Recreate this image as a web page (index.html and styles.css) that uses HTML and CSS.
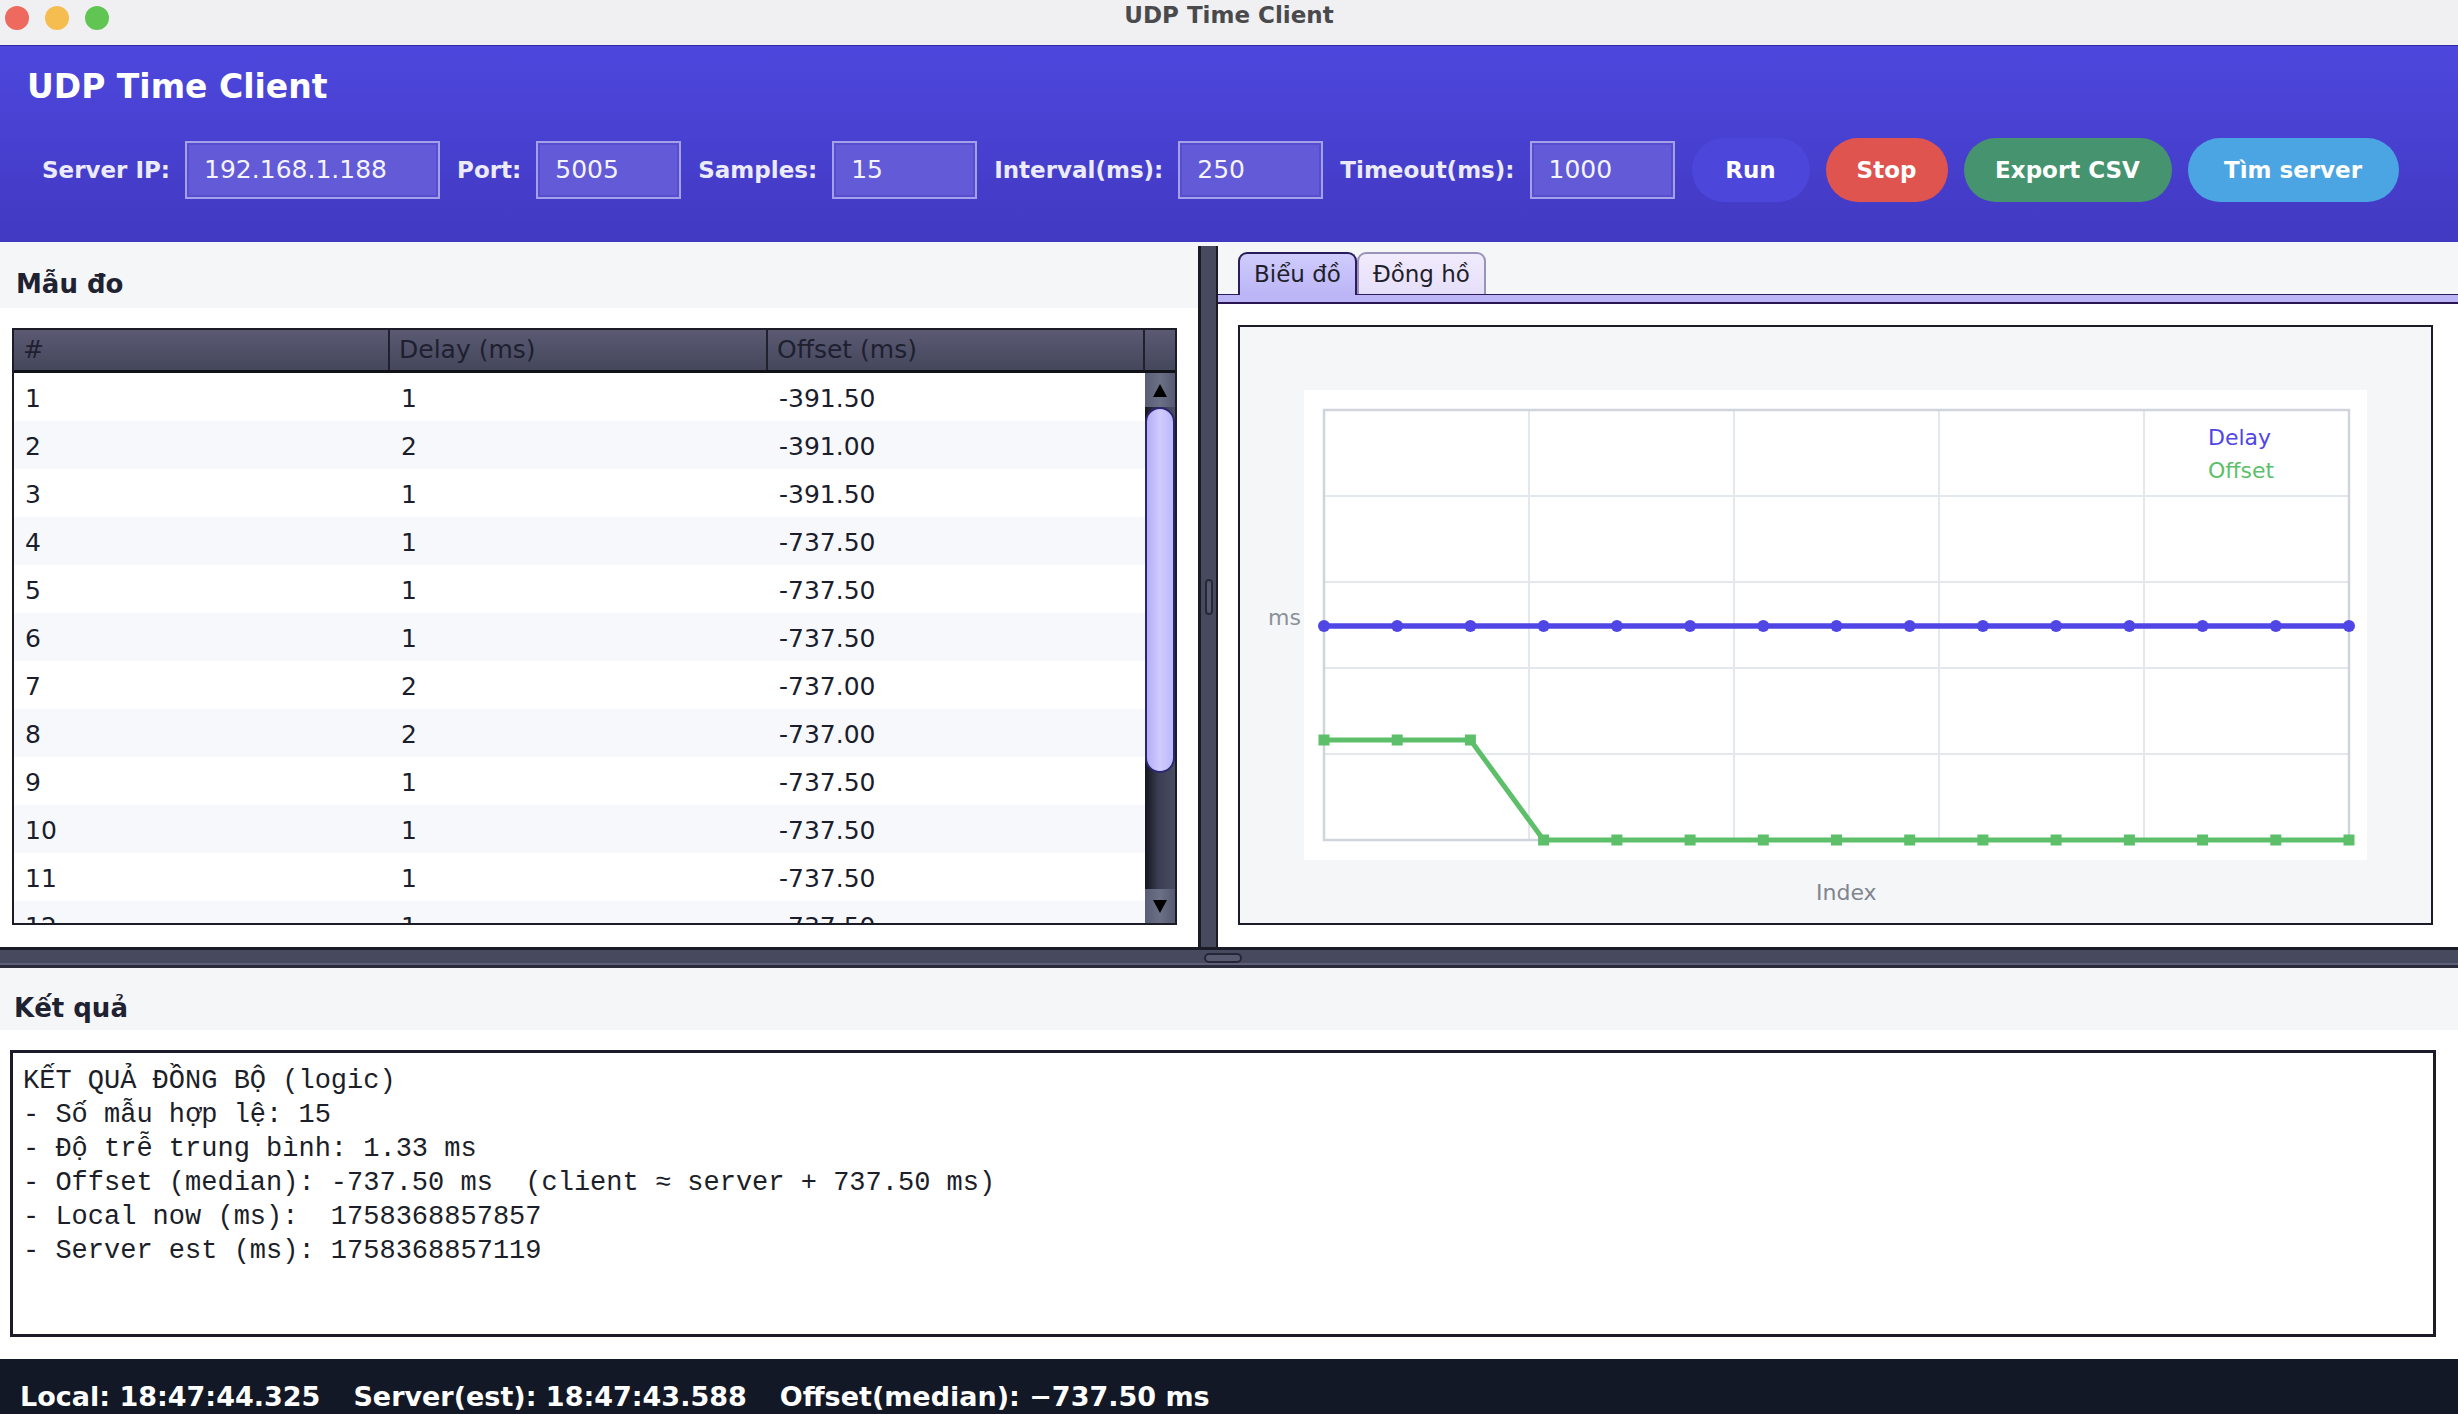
FILE: index.html
```html
<!DOCTYPE html>
<html lang="vi">
<head>
<meta charset="utf-8">
<title>UDP Time Client</title>
<link rel="stylesheet" href="styles.css">
</head>
<body>
<div class="window">
  <div class="titlebar">
    <div class="lights"><span class="light red"></span><span class="light yellow"></span><span class="light green"></span></div>
    <div class="wtitle">UDP Time Client</div>
    <div></div>
  </div>

  <header class="appbar">
    <h1 class="apptitle">UDP Time Client</h1>
    <div class="controls">
      <span class="lbl">Server IP:</span><span class="field w-ip">192.168.1.188</span>
      <span class="lbl">Port:</span><span class="field w-sm">5005</span>
      <span class="lbl">Samples:</span><span class="field w-sm">15</span>
      <span class="lbl">Interval(ms):</span><span class="field w-sm">250</span>
      <span class="lbl">Timeout(ms):</span><span class="field w-sm">1000</span>
      <button class="btn run">Run</button>
      <button class="btn stop">Stop</button>
      <button class="btn export">Export CSV</button>
      <button class="btn find">Tìm server</button>
    </div>
  </header>

  <main class="main">
    <section class="left">
      <h2 class="ptitle">Mẫu đo</h2>
      <div class="tablewrap">
        <div class="table">
          <div class="thead">
            <div class="th">#</div>
            <div class="th">Delay (ms)</div>
            <div class="th">Offset (ms)</div>
            <div class="th th-last"></div>
          </div>
          <div class="tbody">
            <div class="rows">
              <div class="row"><span>1</span><span>1</span><span>-391.50</span></div>
              <div class="row"><span>2</span><span>2</span><span>-391.00</span></div>
              <div class="row"><span>3</span><span>1</span><span>-391.50</span></div>
              <div class="row"><span>4</span><span>1</span><span>-737.50</span></div>
              <div class="row"><span>5</span><span>1</span><span>-737.50</span></div>
              <div class="row"><span>6</span><span>1</span><span>-737.50</span></div>
              <div class="row"><span>7</span><span>2</span><span>-737.00</span></div>
              <div class="row"><span>8</span><span>2</span><span>-737.00</span></div>
              <div class="row"><span>9</span><span>1</span><span>-737.50</span></div>
              <div class="row"><span>10</span><span>1</span><span>-737.50</span></div>
              <div class="row"><span>11</span><span>1</span><span>-737.50</span></div>
              <div class="row"><span>12</span><span>1</span><span>-737.50</span></div>
            </div>
            <div class="vscroll">
              <div class="sbtn"><span class="tri-up"></span></div>
              <div class="track"><div class="thumb"></div></div>
              <div class="sbtn"><span class="tri-down"></span></div>
            </div>
          </div>
        </div>
      </div>
    </section>

    <div class="vdiv"><span class="vgrip"></span></div>

    <section class="right">
      <div class="tabbar">
        <div class="tab active">Biểu đồ</div>
        <div class="tab">Đồng hồ</div>
      </div>
      <div class="tabstrip"></div>
      <div class="chartwrap">
        <div class="chart">
          <svg class="plot" viewBox="0 0 1191 596" width="1191" height="596">
            <rect x="64" y="63" width="1063" height="470" fill="#ffffff"/>
            <g stroke="#e3e7ee" stroke-width="2">
              <line x1="289" y1="83" x2="289" y2="513"/>
              <line x1="494" y1="83" x2="494" y2="513"/>
              <line x1="699" y1="83" x2="699" y2="513"/>
              <line x1="904" y1="83" x2="904" y2="513"/>
              <line x1="84" y1="169" x2="1109" y2="169"/>
              <line x1="84" y1="255" x2="1109" y2="255"/>
              <line x1="84" y1="341" x2="1109" y2="341"/>
              <line x1="84" y1="427" x2="1109" y2="427"/>
            </g>
            <rect x="84" y="83" width="1025" height="430" fill="none" stroke="#cfd4dd" stroke-width="2.5"/>
            <g font-family="DejaVu Sans, sans-serif" font-size="22">
              <text x="968" y="118" fill="#4f46e5">Delay</text>
              <text x="968" y="151" fill="#5dbf6a">Offset</text>
              <text x="28" y="298" fill="#8b909a">ms</text>
              <text x="576" y="573" fill="#80858f">Index</text>
            </g>
            <polyline fill="none" stroke="#4f46e5" stroke-width="5.5" points="84,299 1109,299"/>
            <g fill="#4f46e5">
              <circle cx="84" cy="299" r="6"/>
              <circle cx="157.2" cy="299" r="6"/>
              <circle cx="230.4" cy="299" r="6"/>
              <circle cx="303.6" cy="299" r="6"/>
              <circle cx="376.9" cy="299" r="6"/>
              <circle cx="450.1" cy="299" r="6"/>
              <circle cx="523.3" cy="299" r="6"/>
              <circle cx="596.5" cy="299" r="6"/>
              <circle cx="669.7" cy="299" r="6"/>
              <circle cx="742.9" cy="299" r="6"/>
              <circle cx="816.1" cy="299" r="6"/>
              <circle cx="889.4" cy="299" r="6"/>
              <circle cx="962.6" cy="299" r="6"/>
              <circle cx="1035.8" cy="299" r="6"/>
              <circle cx="1109" cy="299" r="6"/>
            </g>
            <polyline fill="none" stroke="#5dbf6a" stroke-width="5" stroke-linejoin="round" points="84,413 157.2,413 230.4,413 303.6,513 1109,513"/>
            <g fill="#5dbf6a">
              <rect x="78.5" y="407.5" width="11" height="11"/>
              <rect x="151.7" y="407.5" width="11" height="11"/>
              <rect x="224.9" y="407.5" width="11" height="11"/>
              <rect x="298.1" y="507.5" width="11" height="11"/>
              <rect x="371.4" y="507.5" width="11" height="11"/>
              <rect x="444.6" y="507.5" width="11" height="11"/>
              <rect x="517.8" y="507.5" width="11" height="11"/>
              <rect x="591" y="507.5" width="11" height="11"/>
              <rect x="664.2" y="507.5" width="11" height="11"/>
              <rect x="737.4" y="507.5" width="11" height="11"/>
              <rect x="810.6" y="507.5" width="11" height="11"/>
              <rect x="883.9" y="507.5" width="11" height="11"/>
              <rect x="957.1" y="507.5" width="11" height="11"/>
              <rect x="1030.3" y="507.5" width="11" height="11"/>
              <rect x="1103.5" y="507.5" width="11" height="11"/>
            </g>
          </svg>
        </div>
      </div>
    </section>
  </main>

  <div class="hdiv"><span class="hgrip"></span></div>

  <section class="results">
    <h2 class="rtitle">Kết quả</h2>
    <div class="rbody">
<pre class="output">KẾT QUẢ ĐỒNG BỘ (logic)
- Số mẫu hợp lệ: 15
- Độ trễ trung bình: 1.33 ms
- Offset (median): -737.50 ms  (client ≈ server + 737.50 ms)
- Local now (ms):  1758368857857
- Server est (ms): 1758368857119</pre>
    </div>
  </section>

  <footer class="status">
    <span>Local: 18:47:44.325</span>
    <span>Server(est): 18:47:43.588</span>
    <span>Offset(median): −737.50 ms</span>
  </footer>
</div>
</body>
</html>
```

FILE: styles.css
```css
* { box-sizing: border-box; }
html, body { margin: 0; padding: 0; }
body {
  width: 2458px;
  height: 1414px;
  overflow: hidden;
  background: #f5f6f8;
  font-family: "DejaVu Sans", "Noto Sans", sans-serif;
  color: #1f2230;
}
.window { display: flex; flex-direction: column; height: 1414px; }

/* title bar */
.titlebar {
  height: 46px; flex: none;
  background: #f0f0f2;
  border-bottom: 1px solid #2d28a6;
  display: grid;
  grid-template-columns: 1fr auto 1fr;
}
.lights { display: flex; gap: 16px; padding: 6px 0 0 5px; }
.light { width: 24px; height: 24px; border-radius: 50%; }
.red { background: #ee6a5f; }
.yellow { background: #f5bd4f; }
.green { background: #61c554; }
.wtitle { font-weight: bold; font-size: 23px; line-height: 30px; color: #4a4a4c; }

/* app header */
.appbar {
  height: 196px; flex: none;
  background: linear-gradient(180deg, #4d47dd 0%, #4239c2 100%);
  padding-top: 21px;
}
.apptitle { margin: 0 0 0 27px; font-size: 33px; line-height: 40px; font-weight: bold; color: #ffffff; }
.controls { display: flex; align-items: center; height: 64px; margin-top: 31px; padding-left: 42px; }
.lbl { font-weight: bold; font-size: 23px; color: #ecebfb; margin-right: 15px; white-space: nowrap; }
.field {
  height: 58px;
  border: 2px solid #a4a0ec;
  box-shadow: inset 0 0 0 2px #574ecf;
  background: #625ad6;
  color: #f4f4ff;
  font-size: 25px;
  line-height: 54px;
  padding-left: 17px;
  margin-right: 17px;
  white-space: nowrap;
}
.w-ip { width: 255px; }
.w-sm { width: 145px; }
.btn {
  height: 64px; border: none; border-radius: 32px;
  color: #ffffff; font-family: inherit; font-weight: bold; font-size: 23px;
  margin: 0 16px 0 0; padding: 0; text-align: center;
}
.run { width: 118px; background: #4c46db; }
.stop { width: 122px; background: #df544f; }
.export { width: 208px; background: #45946f; }
.find { width: 211px; background: #4ba5e2; }

/* main split */
.main { height: 705px; flex: none; display: flex; background: #f5f6f8; }
.left { width: 1198px; flex: none; display: flex; flex-direction: column; background: #ffffff; }
.ptitle {
  height: 66px; flex: none; margin: 0;
  background: #f5f6f8;
  padding: 22px 0 0 16px;
  font-size: 26px; line-height: 40px; font-weight: bold; color: #1f2230;
}
.tablewrap { flex: 1; padding: 20px 21px 22px 12px; }
.table { height: 597px; border: 2px solid #1c1c28; display: flex; flex-direction: column; background: #ffffff; }
.thead {
  height: 43px; flex: none;
  display: grid; grid-template-columns: 376px 378px 377px 30px;
  border-bottom: 3px solid #111118;
  background: linear-gradient(180deg, #5a5b73 0%, #45475c 100%);
}
.th {
  border-right: 2px solid #202130;
  padding-left: 9px;
  font-size: 25px; line-height: 40px; color: #1e2030;
  white-space: nowrap;
}
.th-last { border-right: none; }
.tbody { flex: 1; display: flex; overflow: hidden; }
.rows { flex: 1; overflow: hidden; }
.row {
  display: grid; grid-template-columns: 376px 378px 377px;
  height: 48px; background: #ffffff;
}
.row:nth-child(even) { background: #f7f8fb; }
.row span { padding: 3px 0 0 11px; font-size: 25px; line-height: 45px; color: #1a1d2b; white-space: nowrap; }

.vscroll {
  width: 30px; flex: none; display: flex; flex-direction: column;
  background: linear-gradient(90deg, #15151f 0%, #3b3e52 45%, #4a4d62 100%);
}
.sbtn {
  height: 34px; flex: none;
  background: linear-gradient(90deg, #5a5e74 0%, #6c7087 50%, #565a6f 100%);
  display: flex; align-items: center; justify-content: center;
}
.tri-up { width: 0; height: 0; border-left: 7px solid transparent; border-right: 7px solid transparent; border-bottom: 13px solid #000000; }
.tri-down { width: 0; height: 0; border-left: 7px solid transparent; border-right: 7px solid transparent; border-top: 13px solid #000000; }
.track { flex: 1; }
.thumb {
  height: 366px;
  background: linear-gradient(90deg, #b4aef6 0%, #d0ccfd 50%, #bcb7f8 100%);
  border: 2px solid #2b2670;
  border-radius: 15px;
}

.vdiv {
  width: 20px; flex: none; margin-top: 4px;
  background: #474a5e;
  border-left: 3px solid #1b1b27;
  border-right: 2px solid #1b1b27;
  display: flex; align-items: center; justify-content: center;
}
.vgrip { width: 8px; height: 36px; border: 2px solid #262736; border-radius: 4px; background: #55586c; }

.right { flex: 1; display: flex; flex-direction: column; background: #ffffff; }
.tabbar { height: 52px; flex: none; background: #f5f6f8; display: flex; align-items: flex-end; padding-left: 20px; }
.tab {
  height: 42px; padding: 2px 14px 0;
  border: 2px solid #9a93b9; border-bottom: none;
  border-radius: 9px 9px 0 0;
  background: linear-gradient(180deg, #f1ebfd 0%, #e6dffa 100%);
  font-size: 23px; line-height: 36px; color: #1f1f2b;
  white-space: nowrap;
}
.tab.active {
  border-color: #2b1c5c;
  background: linear-gradient(180deg, #d0ccfc 0%, #bbb5f6 100%);
  height: 43px; margin-bottom: -1px;
  position: relative; z-index: 1;
}
.tabstrip { height: 10px; flex: none; background: #bcb6f6; border-top: 1px solid #2b1c5c; border-bottom: 2px solid #2a1552; }
.chartwrap { flex: 1; padding: 21px 25px 22px 20px; }
.chart { height: 600px; border: 2px solid #1c1b28; background: #f5f6f8; }
.plot { display: block; width: 1191px; height: 596px; }

.hdiv {
  height: 21px; flex: none;
  background: #474a5e;
  border-top: 3px solid #1b1b27;
  border-bottom: 3px solid #2a2b3a;
  box-shadow: inset 0 -2px 0 #5d6077;
  display: flex; align-items: center; justify-content: center;
}
.hgrip { width: 38px; height: 10px; margin-right: 12px; border: 2px solid #262736; border-radius: 5px; background: #575a6e; }

.results { height: 391px; flex: none; display: flex; flex-direction: column; background: #ffffff; }
.rtitle {
  height: 62px; flex: none; margin: 0;
  background: #f5f6f8;
  padding: 20px 0 0 14px;
  font-size: 26px; line-height: 40px; font-weight: bold; color: #1f2230;
}
.rbody { flex: 1; padding: 20px 22px 22px 10px; }
.output {
  height: 287px; margin: 0;
  border: 3px solid #1c1b29; background: #ffffff;
  padding: 11px 0 0 10px;
  font-family: "Liberation Mono", "DejaVu Sans Mono", monospace;
  font-size: 27px; line-height: 34px; color: #1c1e28;
  white-space: pre; overflow: hidden;
}

.status {
  height: 55px; flex: none;
  background: #131826; color: #ffffff;
  font-weight: bold; font-size: 27px; line-height: 32px;
  padding: 22px 0 0 20px;
  display: flex; gap: 33px; white-space: nowrap;
}
```
